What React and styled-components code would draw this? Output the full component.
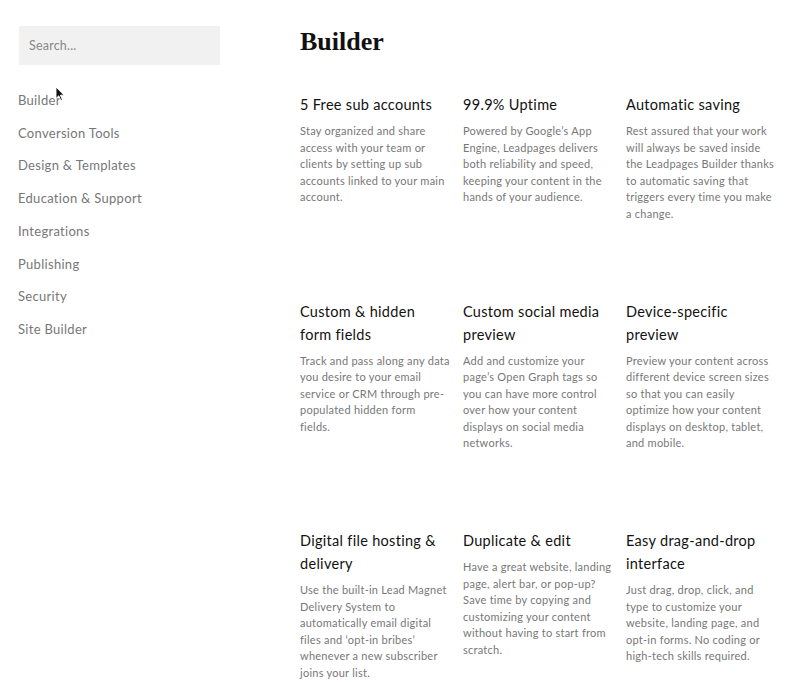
import React from 'react'
import styled, { createGlobalStyle } from 'styled-components'

const GlobalStyle = createGlobalStyle`
  body {
    margin: 0;
    background: #fff;
    font-family: Lato, "Liberation Sans", sans-serif;
  }
`

const categories = [
  'Builder',
  'Conversion Tools',
  'Design & Templates',
  'Education & Support',
  'Integrations',
  'Publishing',
  'Security',
  'Site Builder',
]

const features = [
  {
    title: '5 Free sub accounts',
    text: 'Stay organized and share access with your team or clients by setting up sub accounts linked to your main account.',
  },
  {
    title: '99.9% Uptime',
    text: 'Powered by Google’s App Engine, Leadpages delivers both reliability and speed, keeping your content in the hands of your audience.',
  },
  {
    title: 'Automatic saving',
    text: 'Rest assured that your work will always be saved inside the Leadpages Builder thanks to automatic saving that triggers every time you make a change.',
  },
  {
    title: 'Custom & hidden form fields',
    text: 'Track and pass along any data you desire to your email service or CRM through pre-populated hidden form\nfields.',
  },
  {
    title: 'Custom social media preview',
    text: 'Add and customize your page’s Open Graph tags so you can have more control over how your content displays on social media networks.',
  },
  {
    title: 'Device-specific preview',
    text: 'Preview your content across different device screen sizes so that you can easily optimize how your content displays on desktop, tablet, and mobile.',
  },
  {
    title: 'Digital file hosting & delivery',
    text: 'Use the built-in Lead Magnet Delivery System to automatically email digital files and ‘opt-in bribes’ whenever a new subscriber joins your list.',
  },
  {
    title: 'Duplicate & edit',
    text: 'Have a great website, landing page, alert bar, or pop-up? Save time by copying and customizing your content without having to start from scratch.',
  },
  {
    title: 'Easy drag-and-drop interface',
    text: 'Just drag, drop, click, and type to customize your website, landing page, and opt-in forms. No coding or high-tech skills required.',
  },
]

const Page = styled.div`
  position: relative;
  display: flex;
  width: 800px;
  height: 686px;
  overflow: hidden;
`

const Sidebar = styled.aside`
  width: 300px;
  flex: none;
  padding: 26px 0 0 18px;
  box-sizing: border-box;
`

const SearchBox = styled.input`
  display: block;
  width: 201px;
  height: 39px;
  margin-left: 1px;
  box-sizing: border-box;
  border: none;
  outline: none;
  background: #f1f1f1;
  padding: 0 10px;
  font-family: inherit;
  font-size: 12.5px;
  letter-spacing: 0.2px;
  color: #555;

  &::placeholder {
    color: #888;
  }
`

const NavList = styled.ul`
  list-style: none;
  margin: 19px 0 0;
  padding: 0;
`

const NavItem = styled.li`
  font-size: 13px;
  letter-spacing: 0.3px;
  line-height: 32.7px;
  color: #777;
  cursor: pointer;
`

const Pointer = styled.svg`
  position: absolute;
  left: 55px;
  top: 86px;
  pointer-events: none;
`

const Main = styled.main`
  flex: 1;
  padding-top: 28px;
`

const Heading = styled.h1`
  margin: 0;
  font-family: "Liberation Serif", serif;
  font-weight: 700;
  font-size: 26px;
  line-height: 28px;
  color: #111;
`

const Grid = styled.div`
  display: grid;
  grid-template-columns: repeat(3, 150px);
  column-gap: 13px;
  row-gap: 77.5px;
  margin-top: 37px;
`

const Feature = styled.div`
  display: flex;
  flex-direction: column;
`

const Title = styled.h3`
  margin: 0;
  max-width: 148px;
  font-size: 14.5px;
  font-weight: 400;
  letter-spacing: 0.3px;
  line-height: 23px;
  color: #111;
`

const Text = styled.p`
  margin: 7px 0 0;
  font-size: 11px;
  letter-spacing: 0.25px;
  line-height: 16.5px;
  white-space: pre-line;
  color: #777;
`

export default function App() {
  return (
    <Page>
      <GlobalStyle />
      <Sidebar>
        <SearchBox placeholder="Search..." />
        <NavList>
          {categories.map(c => (
            <NavItem key={c}>{c}</NavItem>
          ))}
        </NavList>
      </Sidebar>
      <Main>
        <Heading>Builder</Heading>
        <Grid>
          {features.map(f => (
            <Feature key={f.title}>
              <Title>{f.title}</Title>
              <Text>{f.text}</Text>
            </Feature>
          ))}
        </Grid>
      </Main>
      <Pointer width="10" height="16" viewBox="0 0 10 16">
        <path d="M1 1 L1 12.5 L3.8 9.8 L5.8 14.5 L7.4 13.8 L5.4 9.2 L9 9.2 Z" fill="#111" stroke="#fff" strokeWidth="0.9" strokeLinejoin="round" />
      </Pointer>
    </Page>
  )
}
